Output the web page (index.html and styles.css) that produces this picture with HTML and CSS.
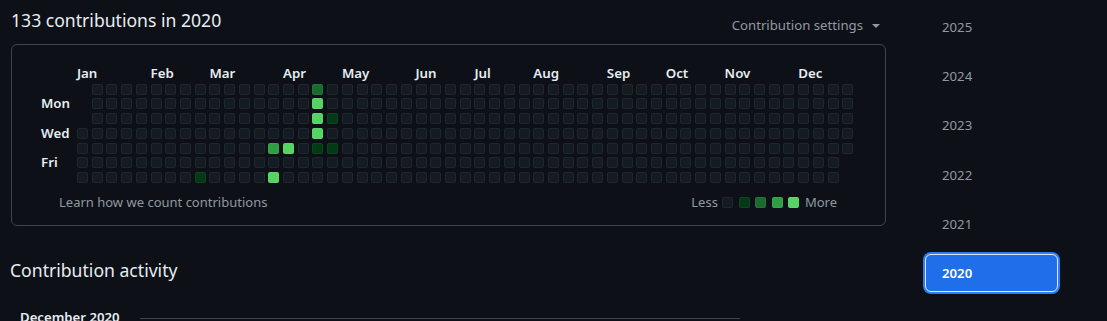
FILE: index.html
```html
<!DOCTYPE html>
<html lang="en">
<head>
    <meta charset="UTF-8">
    <title>Contributions</title>
    <link rel="stylesheet" href="styles.css">
</head>
<body>
    <div class="layout">
        <div class="main">
            <div class="head">
                <h2 class="h-title">133 contributions in 2020</h2>
                <div class="settings">Contribution settings <span class="caret"></span></div>
            </div>

            <div class="calendar">
                <div class="graph">
                    <div class="corner"></div>
                    <div class="months" id="months"></div>
                    <div class="days">
                        <span></span>
                        <span>Mon</span>
                        <span></span>
                        <span>Wed</span>
                        <span></span>
                        <span>Fri</span>
                        <span></span>
                    </div>
                    <div class="cells" id="cells"></div>
                </div>
                <div class="graph-footer">
                    <a class="learn" href="#">Learn how we count contributions</a>
                    <div class="legend">
                        <span class="legend-text">Less</span>
                        <span class="day"></span>
                        <span class="day lvl-1"></span>
                        <span class="day lvl-2"></span>
                        <span class="day lvl-3"></span>
                        <span class="day lvl-4"></span>
                        <span class="legend-text more">More</span>
                    </div>
                </div>
            </div>

            <h2 class="h-title activity">Contribution activity</h2>

            <div class="month-row">
                <h3>December 2020</h3>
                <div class="month-line"></div>
            </div>
        </div>

        <ul class="years">
            <li><a href="#">2025</a></li>
            <li><a href="#">2024</a></li>
            <li><a href="#">2023</a></li>
            <li><a href="#">2022</a></li>
            <li><a href="#">2021</a></li>
            <li><a href="#" class="selected">2020</a></li>
        </ul>
    </div>
    <script src="script.js"></script>
</body>
</html>
```

FILE: styles.css
```css
body {
    margin: 0;
    background-color: #0d1117;
    color: #e6edf3;
    font-family: "Segoe UI", "Noto Sans", sans-serif;
}

.layout {
    display: flex;
    gap: 37px;
    padding-left: 11px;
}

.main {
    width: 875px;
}

.head {
    display: flex;
    justify-content: space-between;
    align-items: flex-start;
    height: 44px;
    box-sizing: border-box;
    padding-top: 8px;
}

.h-title {
    margin: 0;
    font-size: 17.6px;
    font-weight: 400;
    line-height: 24px;
}

.settings {
    margin-top: 7px;
    margin-right: 6px;
    font-size: 13.2px;
    line-height: 20px;
    color: #9198a1;
    display: flex;
    align-items: center;
}

.caret {
    display: inline-block;
    margin-left: 9px;
    margin-top: 1px;
    border-left: 4px solid transparent;
    border-right: 4px solid transparent;
    border-top: 4px solid #9198a1;
}

/* calendar box */
.calendar {
    border: 1px solid #3d444d;
    border-radius: 6px;
    padding: 21px 0 16px 29px;
}

.graph {
    display: grid;
    grid-template-columns: 32.27px auto;
    grid-template-rows: 14px auto;
    gap: 3.73px;
    width: max-content;
}

.months {
    display: grid;
    grid-template-columns: repeat(53, 11px);
    column-gap: 3.73px;
    font-size: 13.3px;
    font-weight: 600;
    line-height: 14px;
}

.months span {
    white-space: nowrap;
    grid-column-end: span 3;
}

.days {
    display: grid;
    grid-template-rows: repeat(7, 11px);
    row-gap: 3.73px;
    font-size: 13.3px;
    font-weight: 600;
    line-height: 11px;
}

.days span {
    white-space: nowrap;
}

.cells {
    display: grid;
    grid-template-rows: repeat(7, 11px);
    grid-auto-flow: column;
    grid-auto-columns: 11px;
    gap: 3.73px;
}

.day {
    display: block;
    width: 11px;
    height: 11px;
    border-radius: 2px;
    background-color: #151b23;
    box-shadow: inset 0 0 0 1px rgba(255, 255, 255, 0.05);
    box-sizing: border-box;
}

.day.blank {
    visibility: hidden;
}

.lvl-1 {
    background-color: #033a16;
}

.lvl-2 {
    background-color: #196c2e;
}

.lvl-3 {
    background-color: #2ea043;
}

.lvl-4 {
    background-color: #56d364;
}

.graph-footer {
    display: flex;
    justify-content: space-between;
    align-items: center;
    width: 778px;
    margin: 12px 0 0 18px;
    font-size: 13px;
    line-height: 14px;
    color: #9198a1;
}

.learn {
    color: #9198a1;
    text-decoration: none;
}

.legend {
    display: flex;
    align-items: center;
    gap: 5.5px;
}

.legend-text {
    margin-right: -1px;
}

.legend .more {
    margin-left: 0;
    margin-right: 0;
}

.activity {
    margin-top: 32px;
    margin-left: -1px;
}

.month-row {
    display: flex;
    align-items: center;
    width: 729px;
    margin-top: 25px;
}

.month-row h3 {
    margin: 0;
    padding-left: 9px;
    font-size: 13.2px;
    font-weight: 600;
    line-height: 20px;
    white-space: nowrap;
}

.month-line {
    flex: 1;
    height: 1px;
    margin-left: 20px;
    margin-top: 2px;
    background-color: #3d444d;
}

/* year list */
.years {
    list-style: none;
    margin: 0 0 0 2px;
    padding: 8px 0 0 0;
    width: 133px;
}

.years li {
    margin-bottom: 11.2px;
}

.years a {
    display: block;
    height: 38px;
    box-sizing: border-box;
    padding-left: 17px;
    font-size: 13.2px;
    line-height: 38px;
    color: #9198a1;
    text-decoration: none;
    border-radius: 6px;
}

.years a.selected {
    background-color: #1f6feb;
    color: #ffffff;
    font-weight: 600;
    border: 1px solid #dce9ff;
    box-shadow: 0 0 0 2px #2f7df2;
    line-height: 36px;
    padding-left: 16px;
}
```

FILE: script.js
```js
// contribution levels, keyed by "week-day" (day 0 = Sunday)
var levels = {
    "8-6": 1,
    "13-4": 3, "13-6": 4,
    "14-4": 4,
    "16-0": 2, "16-1": 4, "16-2": 4, "16-3": 4, "16-4": 1,
    "17-2": 1, "17-4": 1
};

var months = [
    ["Jan", 0], ["Feb", 5], ["Mar", 9], ["Apr", 14], ["May", 18], ["Jun", 23],
    ["Jul", 27], ["Aug", 31], ["Sep", 36], ["Oct", 40], ["Nov", 44], ["Dec", 49]
];

var monthsEl = document.getElementById("months");
months.forEach(function (m) {
    var span = document.createElement("span");
    span.textContent = m[0];
    span.style.gridColumnStart = m[1] + 1;
    monthsEl.appendChild(span);
});

// 2020 starts on a Wednesday and has 366 days
var cellsEl = document.getElementById("cells");
var start = 3;
for (var i = 0; i < start + 366; i++) {
    var cell = document.createElement("span");
    cell.className = "day";
    if (i < start) {
        cell.className += " blank";
    } else {
        var key = Math.floor(i / 7) + "-" + (i % 7);
        if (levels[key]) {
            cell.className += " lvl-" + levels[key];
        }
    }
    cellsEl.appendChild(cell);
}
```
